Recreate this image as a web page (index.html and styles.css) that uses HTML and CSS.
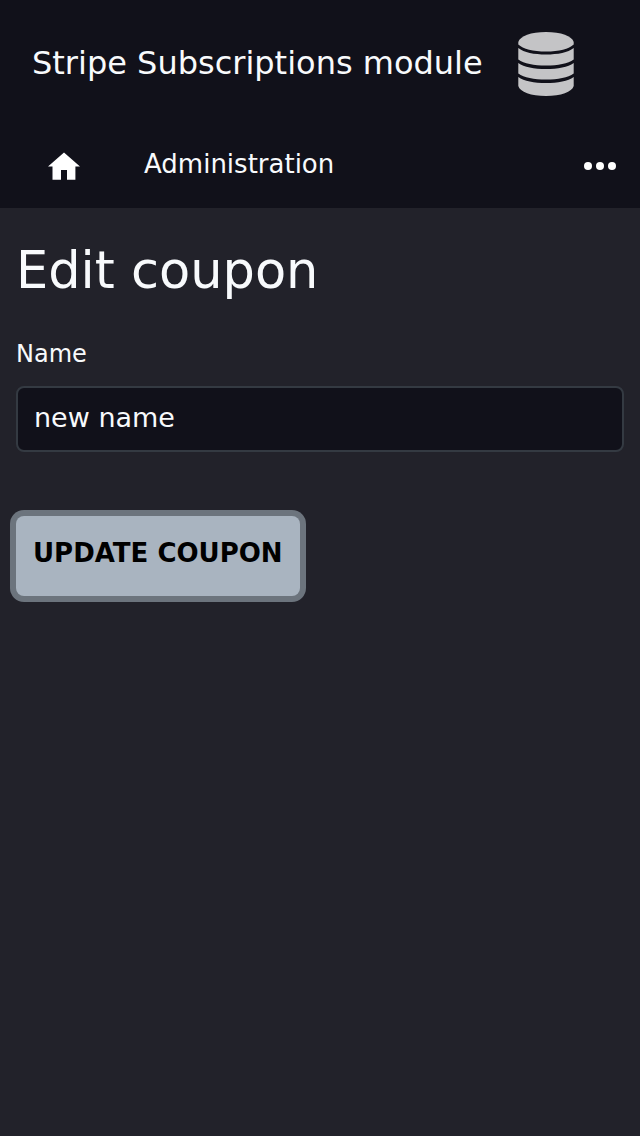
FILE: index.html
```html
<!DOCTYPE html>
<html lang="en">
<head>
<meta charset="utf-8">
<meta name="viewport" content="width=device-width, initial-scale=1">
<title>Edit coupon</title>
<link rel="stylesheet" href="styles.css">
</head>
<body>
<header class="site-header">
  <div class="brand">
    <span class="brand-name">Stripe Subscriptions module</span>
    <svg class="brand-logo" viewBox="0 0 56 64" aria-hidden="true">
      <path d="M0.300 10C2 4 13 0 28 0S54 4 55.700 10V12.500C51 17 41 19.500 28 19.500S5 17 0.300 12.500Z"/>
      <path d="M0.300 16C6 20.500 16 22.500 28 22.500S50 20.500 55.700 16V27.500C50 31.500 40 33.500 28 33.500S6 31.500 0.300 27.500Z"/>
      <path d="M0.300 31C6 35 16 37 28 37S50 35 55.700 31V41.500C50 45.500 40 47.500 28 47.500S6 45.500 0.300 41.500Z"/>
      <path d="M0.300 45C6 49 16 51 28 51S50 49 55.700 45V54C54 60 43 64 28 64S2 60 0.300 54Z"/>
    </svg>
  </div>
  <nav class="toolbar" aria-label="Main">
    <a class="home" href="#" aria-label="Home"><svg class="home-icon" viewBox="0 0 32 28" aria-hidden="true"><path d="M16 0.500L32 14.500H27.400V27.700H19V18H13V27.700H4.500V14.500H0Z"/></svg></a>
    <a class="nav-link" href="#">Administration</a>
    <button class="more" type="button" aria-label="More"><svg class="more-icon" viewBox="0 0 32 8" aria-hidden="true"><circle cx="4" cy="4" r="4"/><circle cx="16" cy="4" r="4"/><circle cx="28" cy="4" r="4"/></svg></button>
  </nav>
</header>
<main class="content">
  <h1 class="title">Edit coupon</h1>
  <form class="form">
    <label class="label" for="name">Name</label>
    <input class="input" id="name" type="text" value="new name">
    <button class="submit" type="button">UPDATE COUPON</button>
  </form>
</main>
</body>
</html>
```
FILE: styles.css
```css
* { box-sizing: border-box; }
body {
  margin: 0;
  min-height: 100vh;
  background: #22222a;
  color: #f8fafc;
  font-family: "DejaVu Sans", sans-serif;
}
.site-header { background: #11111a; }
.brand {
  display: flex;
  align-items: center;
  gap: 35px;
  padding: 32px;
}
.brand-name { padding-bottom: 2px; font-size: 32px; line-height: 48px; }
.brand-logo { width: 56px; height: 64px; fill: #c4c4c6; }
.toolbar {
  display: flex;
  align-items: center;
  height: 80px;
  padding: 0 24px 4px 48px;
}
.home { display: flex; margin-right: 64px; }
.home-icon { width: 32px; height: 28px; fill: #fff; }
.nav-link {
  padding-bottom: 4px;
  color: #f8fafc;
  font-size: 26px;
  line-height: 32px;
  text-decoration: none;
}
.more {
  display: flex;
  margin-left: auto;
  padding: 0;
  border: 0;
  background: none;
}
.more-icon { width: 32px; height: 8px; fill: #fff; }
.content { padding: 32px 16px; }
.title { margin: 0; font-size: 51px; font-weight: 400; line-height: 62px; }
.form {
  display: flex;
  flex-direction: column;
  align-items: flex-start;
  padding-top: 32px;
}
.label { font-size: 24px; line-height: 40px; }
.input {
  width: 100%;
  height: 66px;
  margin-top: 12px;
  padding: 0 16px 4px;
  border: 2px solid #343a42;
  border-radius: 8px;
  background: #11111a;
  color: #f8fafc;
  font: 27px "DejaVu Sans", sans-serif;
}
.submit {
  height: 80px;
  margin-top: 64px;
  padding: 0 17px 6px;
  border: 0;
  border-radius: 8px;
  background: #a9b4c0;
  box-shadow: 0 0 0 6px #6c747d;
  color: #000;
  font: 700 26px "DejaVu Sans", sans-serif;
}
```
